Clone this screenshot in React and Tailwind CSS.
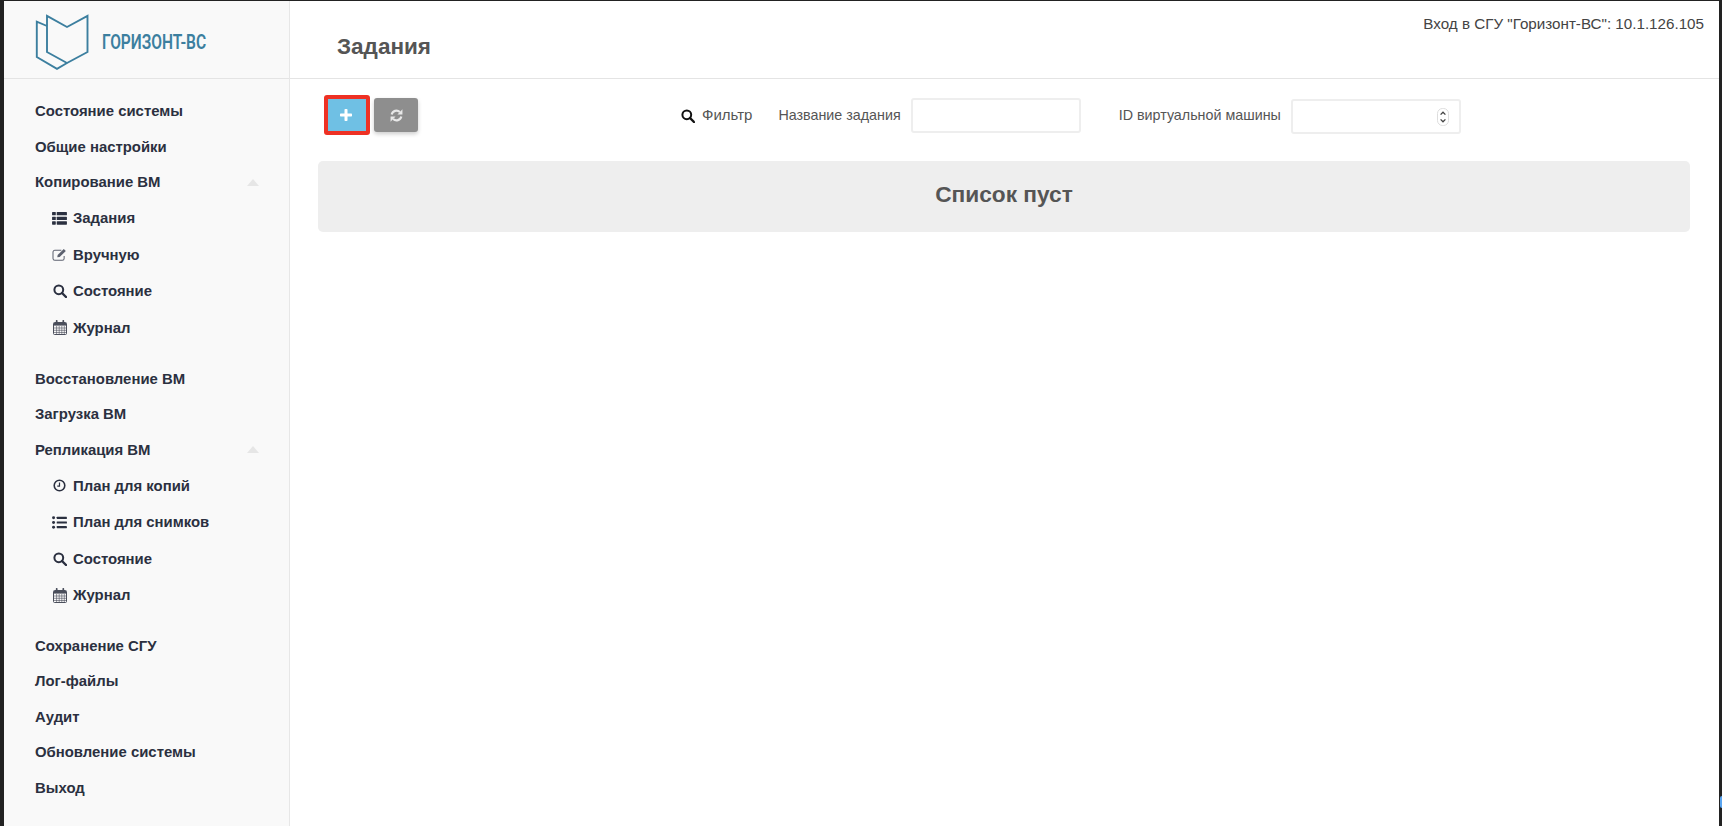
import { useState } from 'react';

const sans = { fontFamily: '"Liberation Sans", Arial, sans-serif' };

function ThList() {
    return (
        <svg viewBox="0 0 16 14" className="w-[15px] h-[13px]" fill="currentColor">
            <rect x="0" y="0" width="4" height="3.6" rx="0.6" />
            <rect x="5" y="0" width="11" height="3.6" rx="0.6" />
            <rect x="0" y="5" width="4" height="3.6" rx="0.6" />
            <rect x="5" y="5" width="11" height="3.6" rx="0.6" />
            <rect x="0" y="10" width="4" height="3.6" rx="0.6" />
            <rect x="5" y="10" width="11" height="3.6" rx="0.6" />
        </svg>
    );
}

function EditIcon() {
    return (
        <svg viewBox="0 0 16 14" className="w-[15px] h-[13px]" fill="none" stroke="#5d6270">
            <path d="M13 8.5v2.7a2 2 0 0 1-2 2H3a2 2 0 0 1-2-2V4.5a2 2 0 0 1 2-2h7" strokeWidth="1.1" />
            <path d="M6 7.5 12.6 1l2.2 2.2L8.2 9.7 5.6 10z" fill="#5d6270" stroke="none" />
        </svg>
    );
}

function SearchIcon({ className }) {
    return (
        <svg viewBox="0 0 14 14" className={className} fill="none" stroke="currentColor">
            <circle cx="5.8" cy="5.8" r="4.4" strokeWidth="2" />
            <path d="M9 9l4 4" strokeWidth="2.4" strokeLinecap="round" />
        </svg>
    );
}

function CalendarIcon() {
    return (
        <svg viewBox="0 0 14 15" className="w-[14px] h-[15px]" fill="none" stroke="#4b4f5c">
            <rect x="0.5" y="2.5" width="13" height="12" rx="1" strokeWidth="1" />
            <rect x="1" y="3" width="12" height="2.6" fill="#4b4f5c" stroke="none" />
            <path d="M3.7 0.8v3M10.3 0.8v3" strokeWidth="1.7" strokeLinecap="round" />
            <path d="M1 8h12M1 10.3h12M1 12.5h12M3.6 6v8M6.2 6v8M8.8 6v8M11.3 6v8" strokeWidth="0.6" />
        </svg>
    );
}

function ClockIcon() {
    return (
        <svg viewBox="0 0 14 14" className="w-[13px] h-[13px]" fill="none" stroke="currentColor">
            <circle cx="7" cy="7" r="5.7" strokeWidth="1.7" />
            <path d="M7 3.8V7.6H4.6" strokeWidth="1.3" />
        </svg>
    );
}

function ListIcon() {
    return (
        <svg viewBox="0 0 16 14" className="w-[15px] h-[13px]" fill="currentColor">
            <circle cx="1.6" cy="2" r="1.6" />
            <circle cx="1.6" cy="7" r="1.6" />
            <circle cx="1.6" cy="12" r="1.6" />
            <rect x="5" y="0.8" width="11" height="2.4" rx="0.5" />
            <rect x="5" y="5.8" width="11" height="2.4" rx="0.5" />
            <rect x="5" y="10.8" width="11" height="2.4" rx="0.5" />
        </svg>
    );
}

function RefreshIcon() {
    return (
        <svg viewBox="0 0 14 14" className="w-[13px] h-[13px]" fill="none" stroke="currentColor" strokeWidth="2.3">
            <path d="M1.8 6A5.3 5.3 0 0 1 10.6 3.2" />
            <path d="M12.2 8A5.3 5.3 0 0 1 3.4 10.8" />
            <path d="M13.4 0.4v5.4H8z" fill="currentColor" stroke="none" />
            <path d="M0.6 13.6V8.2H6z" fill="currentColor" stroke="none" />
        </svg>
    );
}

function Logo() {
    return (
        <svg viewBox="0 0 54 56" className="w-[54px] h-[56px]" fill="none" stroke="#3c7f9f" strokeWidth="1.9">
            <path d="M12 1.8 32 13 52.5 1.8V38L32 49 12 38Z" />
            <path d="M12 12 1.8 7.6V43L22 54.8 32 49" />
        </svg>
    );
}

function TopItem({ label, arrow, className = '' }) {
    return (
        <div className={`h-[35.5px] flex items-center justify-between pl-[31px] pr-[30px] ${className}`}>
            <span className="text-[14.9px] font-bold text-[#2b3040]">{label}</span>
            {arrow && <span className="w-0 h-0 border-x-[6.5px] border-x-transparent border-b-[7px] border-b-[#e6e6e6]" />}
        </div>
    );
}

function SubItem({ icon, label }) {
    return (
        <div className="h-[36.5px] flex items-center pl-[48px] text-[#2b3040]">
            <span className="w-[15px] flex justify-center">{icon}</span>
            <span className="ml-[6px] text-[14.9px] font-bold">{label}</span>
        </div>
    );
}

export default function App() {
    const [name, setName] = useState('');

    return (
        <div className="relative h-[826px] w-[1722px] bg-[#222] pt-px pl-1 pr-[3px] overflow-hidden" style={sans}>
            {/* Sliver of the desktop behind the window */}
            <div className="absolute right-0 top-[796px] w-[2px] h-[12px] rounded-l-[2px] bg-[#5aa5f0]" />
            <div className="flex h-full bg-white">
                {/* Sidebar */}
                <aside className="w-[286px] shrink-0 bg-[#f9f9f9] border-r border-[#e7e7e7]">
                    <div className="h-[78px] border-b border-[#e4e4e4] flex items-start pl-[31px] pt-[13px]">
                        <Logo />
                        <span className="ml-[13px] mt-[14px] text-[#3c7f9f] text-[21px] leading-[28px] font-semibold scale-x-[0.74] origin-left whitespace-nowrap" style={{ fontFamily: '"Roboto", sans-serif' }}>ГОРИЗОНТ-ВС</span>
                    </div>
                    <div className="pt-[14.5px]">
                        <TopItem label="Состояние системы" />
                        <TopItem label="Общие настройки" />
                        <TopItem label="Копирование ВМ" arrow />
                        <SubItem icon={<ThList />} label="Задания" />
                        <SubItem icon={<EditIcon />} label="Вручную" />
                        <SubItem icon={<SearchIcon className="w-[14px] h-[14px]" />} label="Состояние" />
                        <SubItem icon={<CalendarIcon />} label="Журнал" />
                        <TopItem label="Восстановление ВМ" className="mt-[15px]" />
                        <TopItem label="Загрузка ВМ" />
                        <TopItem label="Репликация ВМ" arrow />
                        <SubItem icon={<ClockIcon />} label="План для копий" />
                        <SubItem icon={<ListIcon />} label="План для снимков" />
                        <SubItem icon={<SearchIcon className="w-[14px] h-[14px]" />} label="Состояние" />
                        <SubItem icon={<CalendarIcon />} label="Журнал" />
                        <TopItem label="Сохранение СГУ" className="mt-[14.5px]" />
                        <TopItem label="Лог-файлы" />
                        <TopItem label="Аудит" />
                        <TopItem label="Обновление системы" />
                        <TopItem label="Выход" />
                    </div>
                </aside>

                {/* Main */}
                <main className="flex-1 min-w-0">
                    <header className="h-[78px] border-b border-[#e4e4e4] flex justify-between pl-[47px] pr-[15px]">
                        <h1 className="mt-[31px] text-[22.5px] leading-[30px] font-bold text-[#555]">Задания</h1>
                        <span className="mt-[13px] text-[15.2px] leading-[20px] text-[#444]">Вход в СГУ "Горизонт-ВС": 10.1.126.105</span>
                    </header>
                    <div className="pl-[28px] pr-[29px]">
                        <div className="h-[82px] flex items-start pt-[16px]">
                            <button className="ml-[6px] w-[46px] h-[40px] pr-[2px] bg-[#6fc0e4] border-[4px] border-[#ee3124] rounded-[3px] flex items-center justify-center">
                                <svg viewBox="0 0 12 12" className="w-[12px] h-[12px]" fill="white"><rect x="4.5" y="0" width="3" height="12" rx="0.7" /><rect x="0" y="4.5" width="12" height="3" rx="0.7" /></svg>
                            </button>
                            <button className="ml-[4px] mt-[3px] w-[44px] h-[34px] bg-[#8e8e8e] rounded-[3px] shadow-[0_2px_4px_rgba(0,0,0,0.2)] flex items-center justify-center text-[#e8e8e8]">
                                <RefreshIcon />
                            </button>
                            <div className="ml-[263px] mt-[3px] h-[35px] flex items-center text-[14.3px] text-[#555]">
                                <SearchIcon className="w-[14px] h-[14px] text-[#111]" />
                                <span className="ml-[7px] text-[15px]">Фильтр</span>
                                <span className="ml-[26px]">Название задания</span>
                                <input value={name} onChange={(e) => setName(e.target.value)} className="ml-[10px] w-[170px] h-[35px] bg-white border-2 border-[#eeeeee] rounded-[3px]" />
                                <span className="ml-[38px]">ID виртуальной машины</span>
                                <div className="ml-[10px] w-[170px] h-[35px] mt-[2px] pr-[10px] bg-white border-2 border-[#eeeeee] rounded-[3px] flex items-center justify-end">
                                    <svg viewBox="0 0 12 18" className="w-[12px] h-[18px]" fill="none" stroke="#444" strokeWidth="1.3">
                                        <rect x="0.5" y="0.5" width="11" height="17" rx="5" stroke="#ddd" strokeWidth="1" />
                                        <path d="M3.6 6.6 6 4.2l2.4 2.4M3.6 11.4 6 13.8l2.4-2.4" />
                                    </svg>
                                </div>
                            </div>
                        </div>
                        <div className="h-[71px] pb-[4px] bg-[#eeeeee] rounded-[5px] flex items-center justify-center text-[22.7px] font-bold text-[#555]">Список пуст</div>
                    </div>
                </main>
            </div>
        </div>
    );
}
